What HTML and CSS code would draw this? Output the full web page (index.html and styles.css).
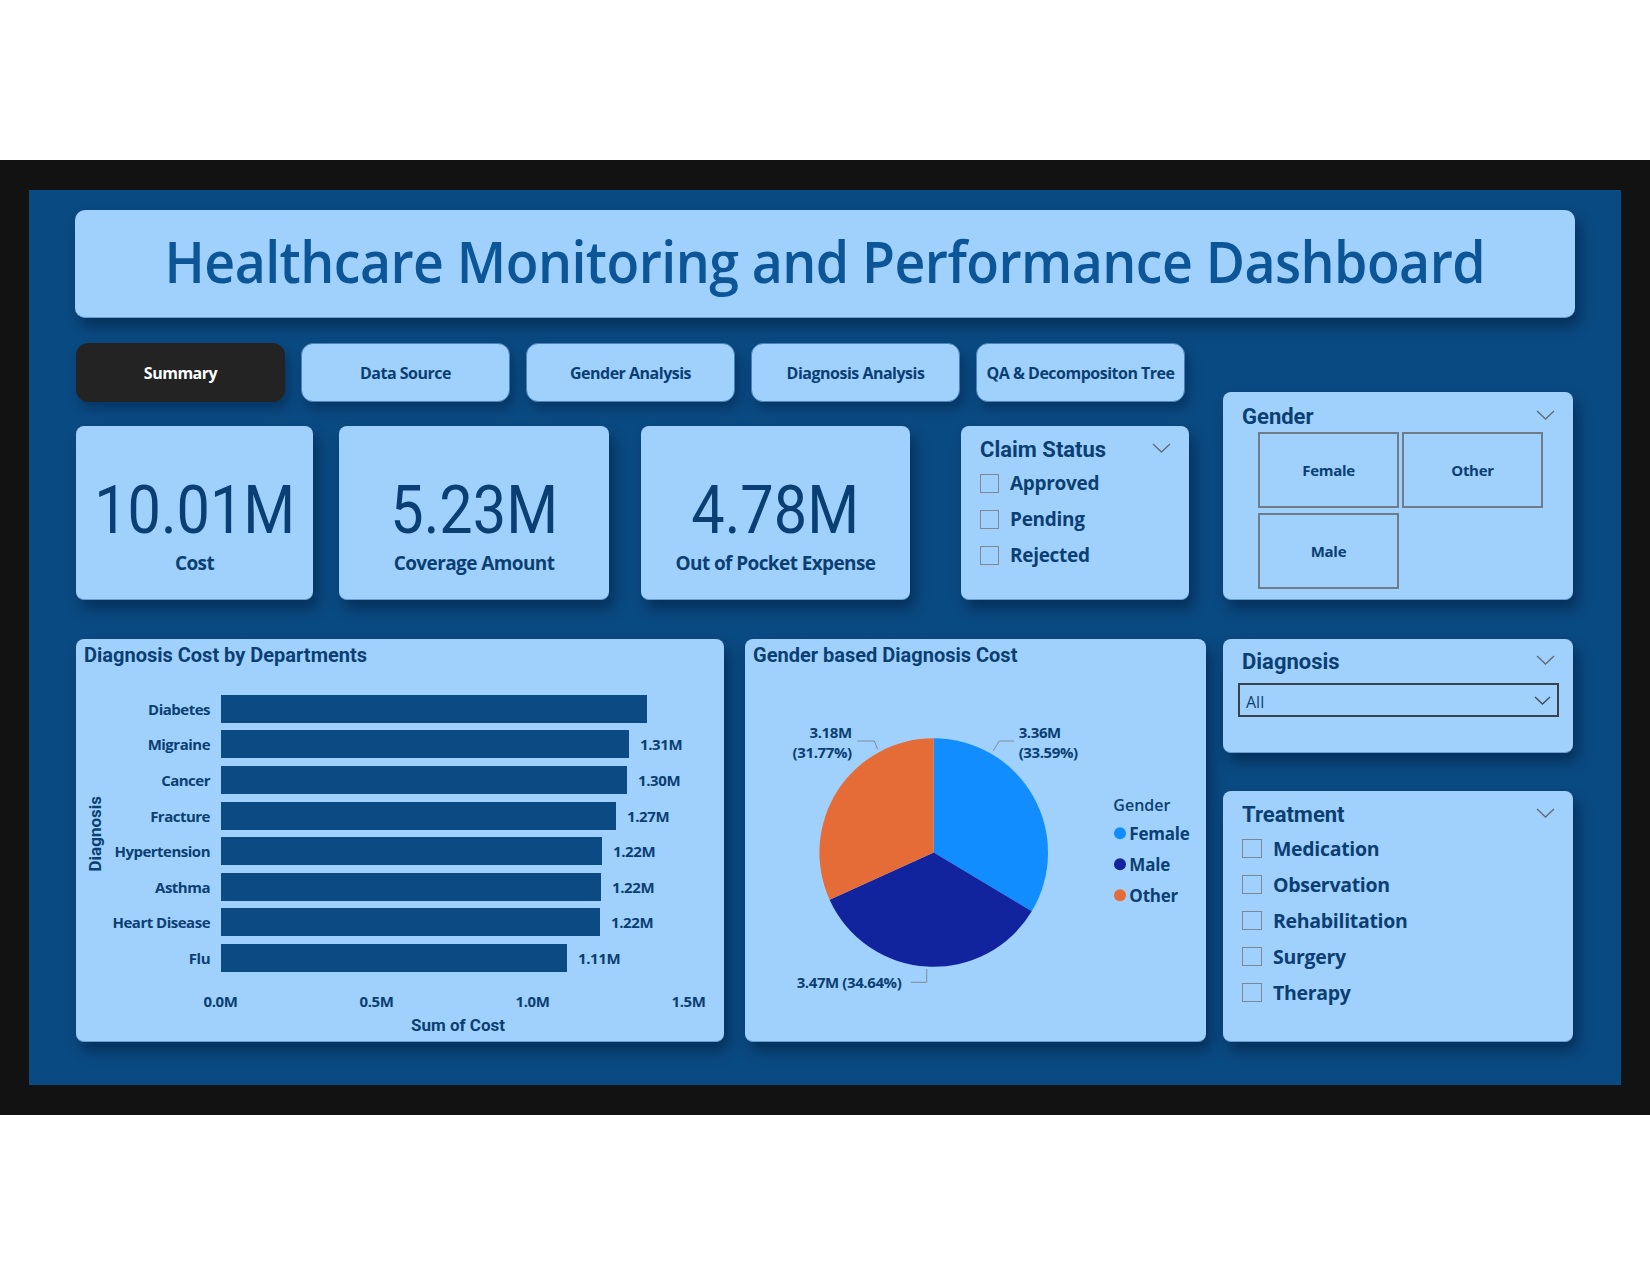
FILE: index.html
```html
<!DOCTYPE html>
<html lang="en">
<head>
<meta charset="utf-8">
<title>Healthcare Monitoring and Performance Dashboard</title>
<link rel="stylesheet" href="styles.css">
</head>
<body>
<div class="top-space"></div>
<div class="frame">
  <div class="canvas">
    <header class="card title-card">
      <h1>Healthcare Monitoring and Performance Dashboard</h1>
    </header>
    <div class="body">
      <div class="left">
        <nav class="tabs">
          <div class="tab active">Summary</div>
          <div class="tab">Data Source</div>
          <div class="tab">Gender Analysis</div>
          <div class="tab">Diagnosis Analysis</div>
          <div class="tab">QA &amp; Decompositon Tree</div>
        </nav>
        <div class="kpis">
          <div class="card kpi kpi-cost"><div class="kpi-num">10.01M</div><div class="kpi-lbl">Cost</div></div>
          <div class="card kpi kpi-cov"><div class="kpi-num">5.23M</div><div class="kpi-lbl">Coverage Amount</div></div>
          <div class="card kpi kpi-oop"><div class="kpi-num">4.78M</div><div class="kpi-lbl">Out of Pocket Expense</div></div>
          <div class="card slicer claim">
            <div class="slicer-head">
              <span class="slicer-title">Claim Status</span>
              <svg class="chev" width="19" height="10" viewBox="0 0 19 10"><path d="M1 1 L9.5 9 L18 1" fill="none" stroke="#5f6a76" stroke-width="1.3"/></svg>
            </div>
            <div class="check-list">
              <div class="check-row"><span class="box"></span>Approved</div>
              <div class="check-row"><span class="box"></span>Pending</div>
              <div class="check-row"><span class="box"></span>Rejected</div>
            </div>
          </div>
        </div>
        <div class="charts">
          <section class="card bar-card">
            <h2 class="chart-title">Diagnosis Cost by Departments</h2>
            <div class="bar-plot">
              <div class="bar-top">
                <div class="y-title"><span>Diagnosis</span></div>
                <div class="bar-rows">
                  <div class="bar-row"><span class="cat">Diabetes</span><span class="bar" style="width:426px"></span><span class="val"></span></div>
                  <div class="bar-row"><span class="cat">Migraine</span><span class="bar" style="width:408px"></span><span class="val">1.31M</span></div>
                  <div class="bar-row"><span class="cat">Cancer</span><span class="bar" style="width:406px"></span><span class="val">1.30M</span></div>
                  <div class="bar-row"><span class="cat">Fracture</span><span class="bar" style="width:395px"></span><span class="val">1.27M</span></div>
                  <div class="bar-row"><span class="cat">Hypertension</span><span class="bar" style="width:381px"></span><span class="val">1.22M</span></div>
                  <div class="bar-row"><span class="cat">Asthma</span><span class="bar" style="width:380px"></span><span class="val">1.22M</span></div>
                  <div class="bar-row"><span class="cat">Heart Disease</span><span class="bar" style="width:379px"></span><span class="val">1.22M</span></div>
                  <div class="bar-row"><span class="cat">Flu</span><span class="bar" style="width:346px"></span><span class="val">1.11M</span></div>
                </div>
              </div>
              <div class="x-ticks"><span>0.0M</span><span>0.5M</span><span>1.0M</span><span>1.5M</span></div>
              <div class="x-title">Sum of Cost</div>
            </div>
          </section>
          <section class="card pie-card">
            <h2 class="chart-title">Gender based Diagnosis Cost</h2>
            <svg class="pie-svg" width="461" height="375" viewBox="0 0 461 375">
              <path d="M188.7,185.5 L188.7,71.2 A114.3,114.3 0 0 1 286.75,244.24 Z" fill="#118dff"/>
              <path d="M188.7,185.5 L286.75,244.24 A114.3,114.3 0 0 1 84.6,232.68 Z" fill="#12239e"/>
              <path d="M188.7,185.5 L84.6,232.68 A114.3,114.3 0 0 1 188.7,71.2 Z" fill="#e66c37"/>
              <polyline points="248.3,83.7 254.3,74 269,74" fill="none" stroke="#7d8c9c" stroke-width="1"/>
              <polyline points="132.7,82.3 129.3,74 112.3,74" fill="none" stroke="#7d8c9c" stroke-width="1"/>
              <polyline points="181.7,302 181.7,315.3 166,315.3" fill="none" stroke="#7d8c9c" stroke-width="1"/>
              <text class="pie-lbl" x="273.7" y="71">3.36M</text>
              <text class="pie-lbl" x="273.7" y="91">(33.59%)</text>
              <text class="pie-lbl" x="106.7" y="71" text-anchor="end">3.18M</text>
              <text class="pie-lbl" x="106.7" y="91" text-anchor="end">(31.77%)</text>
              <text class="pie-lbl" x="51.7" y="320.6">3.47M (34.64%)</text>
              <text class="leg-title" x="368.3" y="144">Gender</text>
              <circle cx="375" cy="166.3" r="6" fill="#118dff"/>
              <text class="leg-item" x="384.3" y="172.5">Female</text>
              <circle cx="375" cy="197.3" r="6" fill="#12239e"/>
              <text class="leg-item" x="384.3" y="203.5">Male</text>
              <circle cx="375" cy="228.3" r="6" fill="#e66c37"/>
              <text class="leg-item" x="384.3" y="234.5">Other</text>
            </svg>
          </section>
        </div>
      </div>
      <aside class="right">
        <div class="card slicer gender">
          <div class="slicer-head">
            <span class="slicer-title">Gender</span>
            <svg class="chev" width="19" height="10" viewBox="0 0 19 10"><path d="M1 1 L9.5 9 L18 1" fill="none" stroke="#5f6a76" stroke-width="1.3"/></svg>
          </div>
          <div class="tiles">
            <div class="tile">Female</div>
            <div class="tile">Other</div>
            <div class="tile">Male</div>
          </div>
        </div>
        <div class="card slicer diag">
          <div class="slicer-head">
            <span class="slicer-title">Diagnosis</span>
            <svg class="chev" width="19" height="10" viewBox="0 0 19 10"><path d="M1 1 L9.5 9 L18 1" fill="none" stroke="#5f6a76" stroke-width="1.3"/></svg>
          </div>
          <div class="dropdown">
            <span>All</span>
            <svg width="17" height="9" viewBox="0 0 17 9"><path d="M1 1 L8.5 8 L16 1" fill="none" stroke="#3e4956" stroke-width="1.3"/></svg>
          </div>
        </div>
        <div class="card slicer treat">
          <div class="slicer-head">
            <span class="slicer-title">Treatment</span>
            <svg class="chev" width="19" height="10" viewBox="0 0 19 10"><path d="M1 1 L9.5 9 L18 1" fill="none" stroke="#5f6a76" stroke-width="1.3"/></svg>
          </div>
          <div class="check-list">
            <div class="check-row"><span class="box"></span>Medication</div>
            <div class="check-row"><span class="box"></span>Observation</div>
            <div class="check-row"><span class="box"></span>Rehabilitation</div>
            <div class="check-row"><span class="box"></span>Surgery</div>
            <div class="check-row"><span class="box"></span>Therapy</div>
          </div>
        </div>
      </aside>
    </div>
  </div>
</div>
</body>
</html>
```

FILE: styles.css
```css
html, body {
  margin: 0;
  padding: 0;
  background: #ffffff;
  font-family: "Open Sans", "Noto Sans", sans-serif;
  color: #0b3f73;
}

.top-space {
  height: 160px;
}

.frame {
  height: 955px;
  background: #121212;
  padding: 30px 29px;
  box-sizing: border-box;
}

.canvas {
  height: 895px;
  background: #0a4a82;
  padding: 20px 46px 0 46px;
  box-sizing: border-box;
}

.card {
  background: #a0d1fd;
  border-radius: 8px;
  box-sizing: border-box;
  box-shadow: 5px 9px 14px rgba(0, 18, 45, 0.45);
  border-bottom: 1px solid #6b9ed0;
}

/* Title */
.title-card {
  width: 1500px;
  height: 108px;
  display: flex;
  align-items: center;
  justify-content: center;
  padding-bottom: 6px;
  border-radius: 10px;
}

.title-card h1 {
  margin: 0;
  font-family: "Open Sans", sans-serif;
  font-weight: 600;
  font-size: 58px;
  line-height: 1;
  letter-spacing: -0.6px;
  white-space: nowrap;
  transform: scaleX(0.925);
  color: #0c5596;
}

.body {
  display: flex;
  gap: 17px;
  margin-top: 25px;
  padding-left: 1px;
}

.left {
  width: 1130px;
}

.right {
  width: 350px;
  padding-top: 49px;
}

/* Tabs */
.tabs {
  display: flex;
  gap: 16px;
  height: 59px;
}

.tab {
  width: 209px;
  height: 59px;
  box-sizing: border-box;
  border-radius: 12px;
  background: #a0d1fd;
  border: 1px solid #4a82bb;
  box-shadow: 4px 7px 12px rgba(0, 18, 45, 0.35);
  display: flex;
  align-items: center;
  justify-content: center;
  font-weight: 700;
  font-size: 16px;
  letter-spacing: -0.5px;
  white-space: nowrap;
  color: #0b3f73;
}

.tab.active {
  background: #232323;
  border-color: #232323;
  color: #ffffff;
}

/* KPI row */
.kpis {
  display: flex;
  margin-top: 24px;
  height: 174px;
}

.kpi {
  display: flex;
  flex-direction: column;
  align-items: center;
  padding-top: 52px;
}

.kpi-cost { width: 237px; }
.kpi-cov { width: 270px; margin-left: 26px; }
.kpi-oop { width: 269px; margin-left: 32px; }
.claim { width: 228px; margin-left: 51px; }

.kpi-num {
  font-family: Roboto, sans-serif;
  font-weight: 400;
  font-size: 66px;
  line-height: 66px;
  transform: scaleX(0.9);
  color: #0b3f73;
}

.kpi-lbl {
  margin-top: 6px;
  font-weight: 700;
  font-size: 19px;
  line-height: 26px;
  letter-spacing: -0.6px;
  color: #0b3f73;
}

/* Slicers */
.slicer {
  padding: 11px 18px 0 19px;
}

.slicer-head {
  display: flex;
  justify-content: space-between;
  align-items: center;
  height: 26px;
}

.slicer-title {
  font-family: Roboto, sans-serif;
  font-weight: 700;
  font-size: 22px;
  line-height: 26px;
  color: #0b3f73;
}

.chev {
  display: block;
  margin-top: -4px;
}

.check-list {
  margin-top: 2px;
}

.check-row {
  display: flex;
  align-items: center;
  height: 36px;
  gap: 11px;
  font-weight: 700;
  font-size: 19px;
  letter-spacing: -0.3px;
  color: #0b3f73;
}

.box {
  width: 19px;
  height: 19px;
  box-sizing: border-box;
  border: 1.5px solid #7c8894;
  flex: none;
}

.gender {
  height: 208px;
  padding-top: 12px;
}

.tiles {
  display: grid;
  grid-template-columns: 141px 141px;
  grid-template-rows: 76px 76px;
  column-gap: 3px;
  row-gap: 5px;
  margin: 2px 0 0 16px;
}

.tile {
  border: 2px solid #6f7d8b;
  display: flex;
  align-items: center;
  justify-content: center;
  font-weight: 700;
  font-size: 15px;
  letter-spacing: -0.3px;
  color: #0b3f73;
}

.diag {
  height: 114px;
  margin-top: 39px;
  padding-top: 10px;
}

.dropdown {
  margin: 8px -4px 0 -4px;
  height: 34px;
  border: 2px solid #38414c;
  box-sizing: border-box;
  display: flex;
  align-items: center;
  justify-content: space-between;
  padding: 3px 6px 0 6px;
  font-size: 16px;
  font-weight: 400;
  color: #0b3f73;
}

.dropdown svg {
  display: block;
  margin-top: -3px;
}

.treat {
  height: 251px;
  margin-top: 38px;
  padding-top: 11px;
}

.treat .check-list {
  margin-top: 2px;
}

.treat .check-row {
  font-size: 19.5px;
}

.treat .box {
  width: 20px;
}

/* Charts */
.charts {
  display: flex;
  gap: 21px;
  margin-top: 39px;
  height: 403px;
}

.bar-card {
  width: 648px;
}

.pie-card {
  width: 461px;
}

.chart-title {
  margin: 0;
  padding: 4px 0 0 8px;
  font-family: Roboto, sans-serif;
  font-weight: 700;
  font-size: 20px;
  line-height: 24px;
  color: #0b3f73;
}

.bar-plot {
  margin-top: 24px;
  padding-left: 9px;
}

.bar-top {
  display: flex;
}

.y-title {
  width: 20px;
  display: flex;
  align-items: center;
  justify-content: center;
}

.y-title span {
  writing-mode: vertical-rl;
  transform: rotate(180deg);
  font-family: Roboto, sans-serif;
  font-weight: 700;
  font-size: 17px;
  color: #0b3f73;
}

.bar-row {
  display: flex;
  align-items: center;
  height: 35.6px;
}

.cat {
  width: 105px;
  margin-right: 11px;
  text-align: right;
  font-weight: 700;
  font-size: 15px;
  letter-spacing: -0.5px;
  color: #0b3f73;
  white-space: nowrap;
}

.bar {
  height: 28px;
  background: #0b4a82;
}

.val {
  margin-left: 11px;
  font-weight: 700;
  font-size: 15px;
  letter-spacing: -0.4px;
  color: #0b3f73;
}

.x-ticks {
  display: flex;
  justify-content: space-between;
  width: 508px;
  margin: 15px 0 0 115.5px;
  line-height: 20px;
}

.x-ticks span {
  width: 40px;
  text-align: center;
  font-weight: 700;
  font-size: 15px;
  letter-spacing: -0.4px;
  color: #0b3f73;
}

.x-title {
  width: 475px;
  margin: 3px 0 0 135.5px;
  text-align: center;
  font-family: Roboto, sans-serif;
  font-weight: 700;
  font-size: 17px;
  line-height: 22px;
  color: #0b3f73;
}

.pie-svg {
  display: block;
}

.pie-lbl {
  font-family: "Open Sans", sans-serif;
  font-weight: 700;
  font-size: 15px;
  letter-spacing: -0.4px;
  fill: #0b3f73;
}

.leg-title {
  font-family: "Open Sans", sans-serif;
  font-weight: 600;
  font-size: 16px;
  fill: #0b3f73;
}

.leg-item {
  font-family: "Open Sans", sans-serif;
  font-weight: 700;
  font-size: 17px;
  letter-spacing: -0.2px;
  fill: #0b3f73;
}
```
